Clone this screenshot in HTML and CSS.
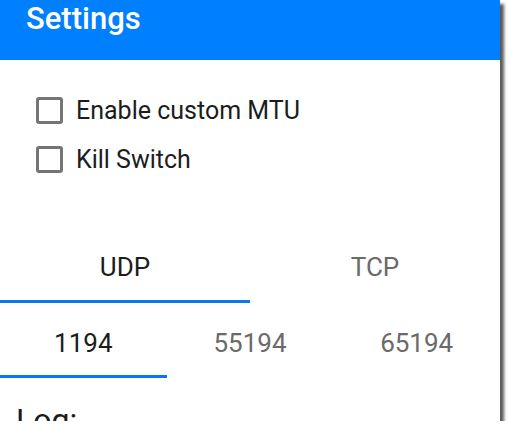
FILE: index.html
```html
<!DOCTYPE html>
<html lang="en">
<head>
    <meta charset="UTF-8">
    <title>Settings</title>
    <link rel="stylesheet" href="styles.css">
</head>
<body>
    <div class="screen">
        <div class="toolbar">Settings</div>
        <div class="options">
            <label class="option"><span class="box"></span>Enable custom MTU</label>
            <label class="option"><span class="box"></span>Kill Switch</label>
        </div>
        <div class="tabs protocol">
            <div class="tab active">UDP</div>
            <div class="tab">TCP</div>
        </div>
        <div class="tabs ports">
            <div class="tab active">1194</div>
            <div class="tab">55194</div>
            <div class="tab">65194</div>
        </div>
        <div class="log">Log:</div>
    </div>
</body>
</html>
```

FILE: styles.css
```css
body {
    margin: 0;
    background-color: #fff;
    font-family: Roboto, "Liberation Sans", sans-serif;
}

.screen {
    width: 500px;
    height: 421px;
    overflow: hidden;
    background-color: #fff;
    box-shadow: 4px 4px 3px rgba(0, 0, 0, 0.65);
}

.toolbar {
    height: 60px;
    box-sizing: border-box;
    padding: 0 0 0 26px;
    background-color: #007fff;
    color: #fff;
    font-size: 31px;
    font-weight: 500;
    line-height: 37px;
}

.options {
    padding: 26px 0 0 36px;
}

.option {
    display: flex;
    align-items: center;
    gap: 13px;
    height: 49px;
    font-size: 25px;
    color: #1c1c1c;
}

.box {
    width: 27px;
    height: 27px;
    box-sizing: border-box;
    border: 3px solid #757575;
    border-radius: 3px;
}

.tabs {
    display: flex;
}

.tab {
    flex: 1;
    text-align: center;
    font-size: 26px;
    line-height: 30px;
    color: #6a6a6a;
    border-bottom: 3px solid transparent;
}

.tab.active {
    color: #1c1c1c;
    border-bottom-color: #0a77f0;
}

.protocol .tab {
    padding: 68px 0 18px;
}

.ports .tab {
    padding: 25px 0 17px;
}

.log {
    margin-top: 24px;
    padding-left: 16px;
    font-size: 32px;
    line-height: 36px;
    color: #1c1c1c;
}
```
